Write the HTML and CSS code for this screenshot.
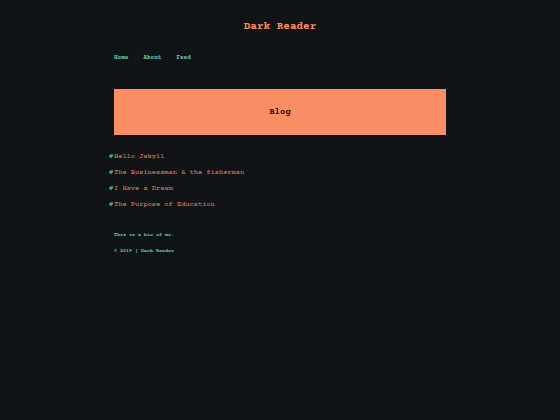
FILE: index.html
```html
<!DOCTYPE html>
<html lang="en">
<head>
<meta charset="utf-8">
<meta name="viewport" content="width=device-width, initial-scale=1">
<title>Dark Reader</title>
<link rel="stylesheet" href="styles.css">
</head>
<body>
<div class="page">
<header>
<h1 class="site-title"><a href="#">Dark Reader</a></h1>
<nav class="nav"><a href="#">Home</a><a href="#">About</a><a href="#">Feed</a></nav>
</header>
<main>
<h2 class="banner">Blog</h2>
<ul class="posts">
<li><a href="#">Hello Jekyll</a></li>
<li><a href="#">The Businessman &amp; the fisherman</a></li>
<li><a href="#">I Have a Dream</a></li>
<li><a href="#">The Purpose of Education</a></li>
</ul>
</main>
<footer class="footer">
<p>This is a bio of me.</p>
<p>© 2019 | Dark Reader</p>
</footer>
</div>
</body>
</html>
```

FILE: styles.css
```css
body {
  margin: 0;
  background: #101417;
  color: #6fc3b2;
  font-family: "Courier Prime", "Liberation Mono", monospace;
}

a {
  color: inherit;
  text-decoration: none;
}

.page {
  max-width: 332px;
  margin: 0 auto;
  padding: 19px 16px;
}

.site-title {
  margin: 0;
  color: #f98e65;
  font-size: 11px;
  line-height: 16px;
  text-align: center;
}

.nav {
  display: flex;
  gap: 15px;
  margin-top: 18px;
  font-size: 6px;
  font-weight: 700;
  line-height: 10px;
}

.banner {
  margin: 26px 0 14px;
  padding: 15px;
  background: #f98e65;
  color: #101417;
  font-size: 9px;
  line-height: 16px;
  text-align: center;
}

.posts {
  margin: 0;
  padding: 0;
  list-style: none;
  color: #e08360;
  font-size: 7px;
  line-height: 16px;
}

.posts li {
  display: flex;
}

.posts li::before {
  content: "#";
  width: 5px;
  margin-left: -5px;
  color: #45c882;
  font-weight: 700;
}

.footer {
  margin-top: 14px;
  font-size: 5px;
  font-weight: 700;
  line-height: 16px;
}

.footer p {
  margin: 0;
}
```
